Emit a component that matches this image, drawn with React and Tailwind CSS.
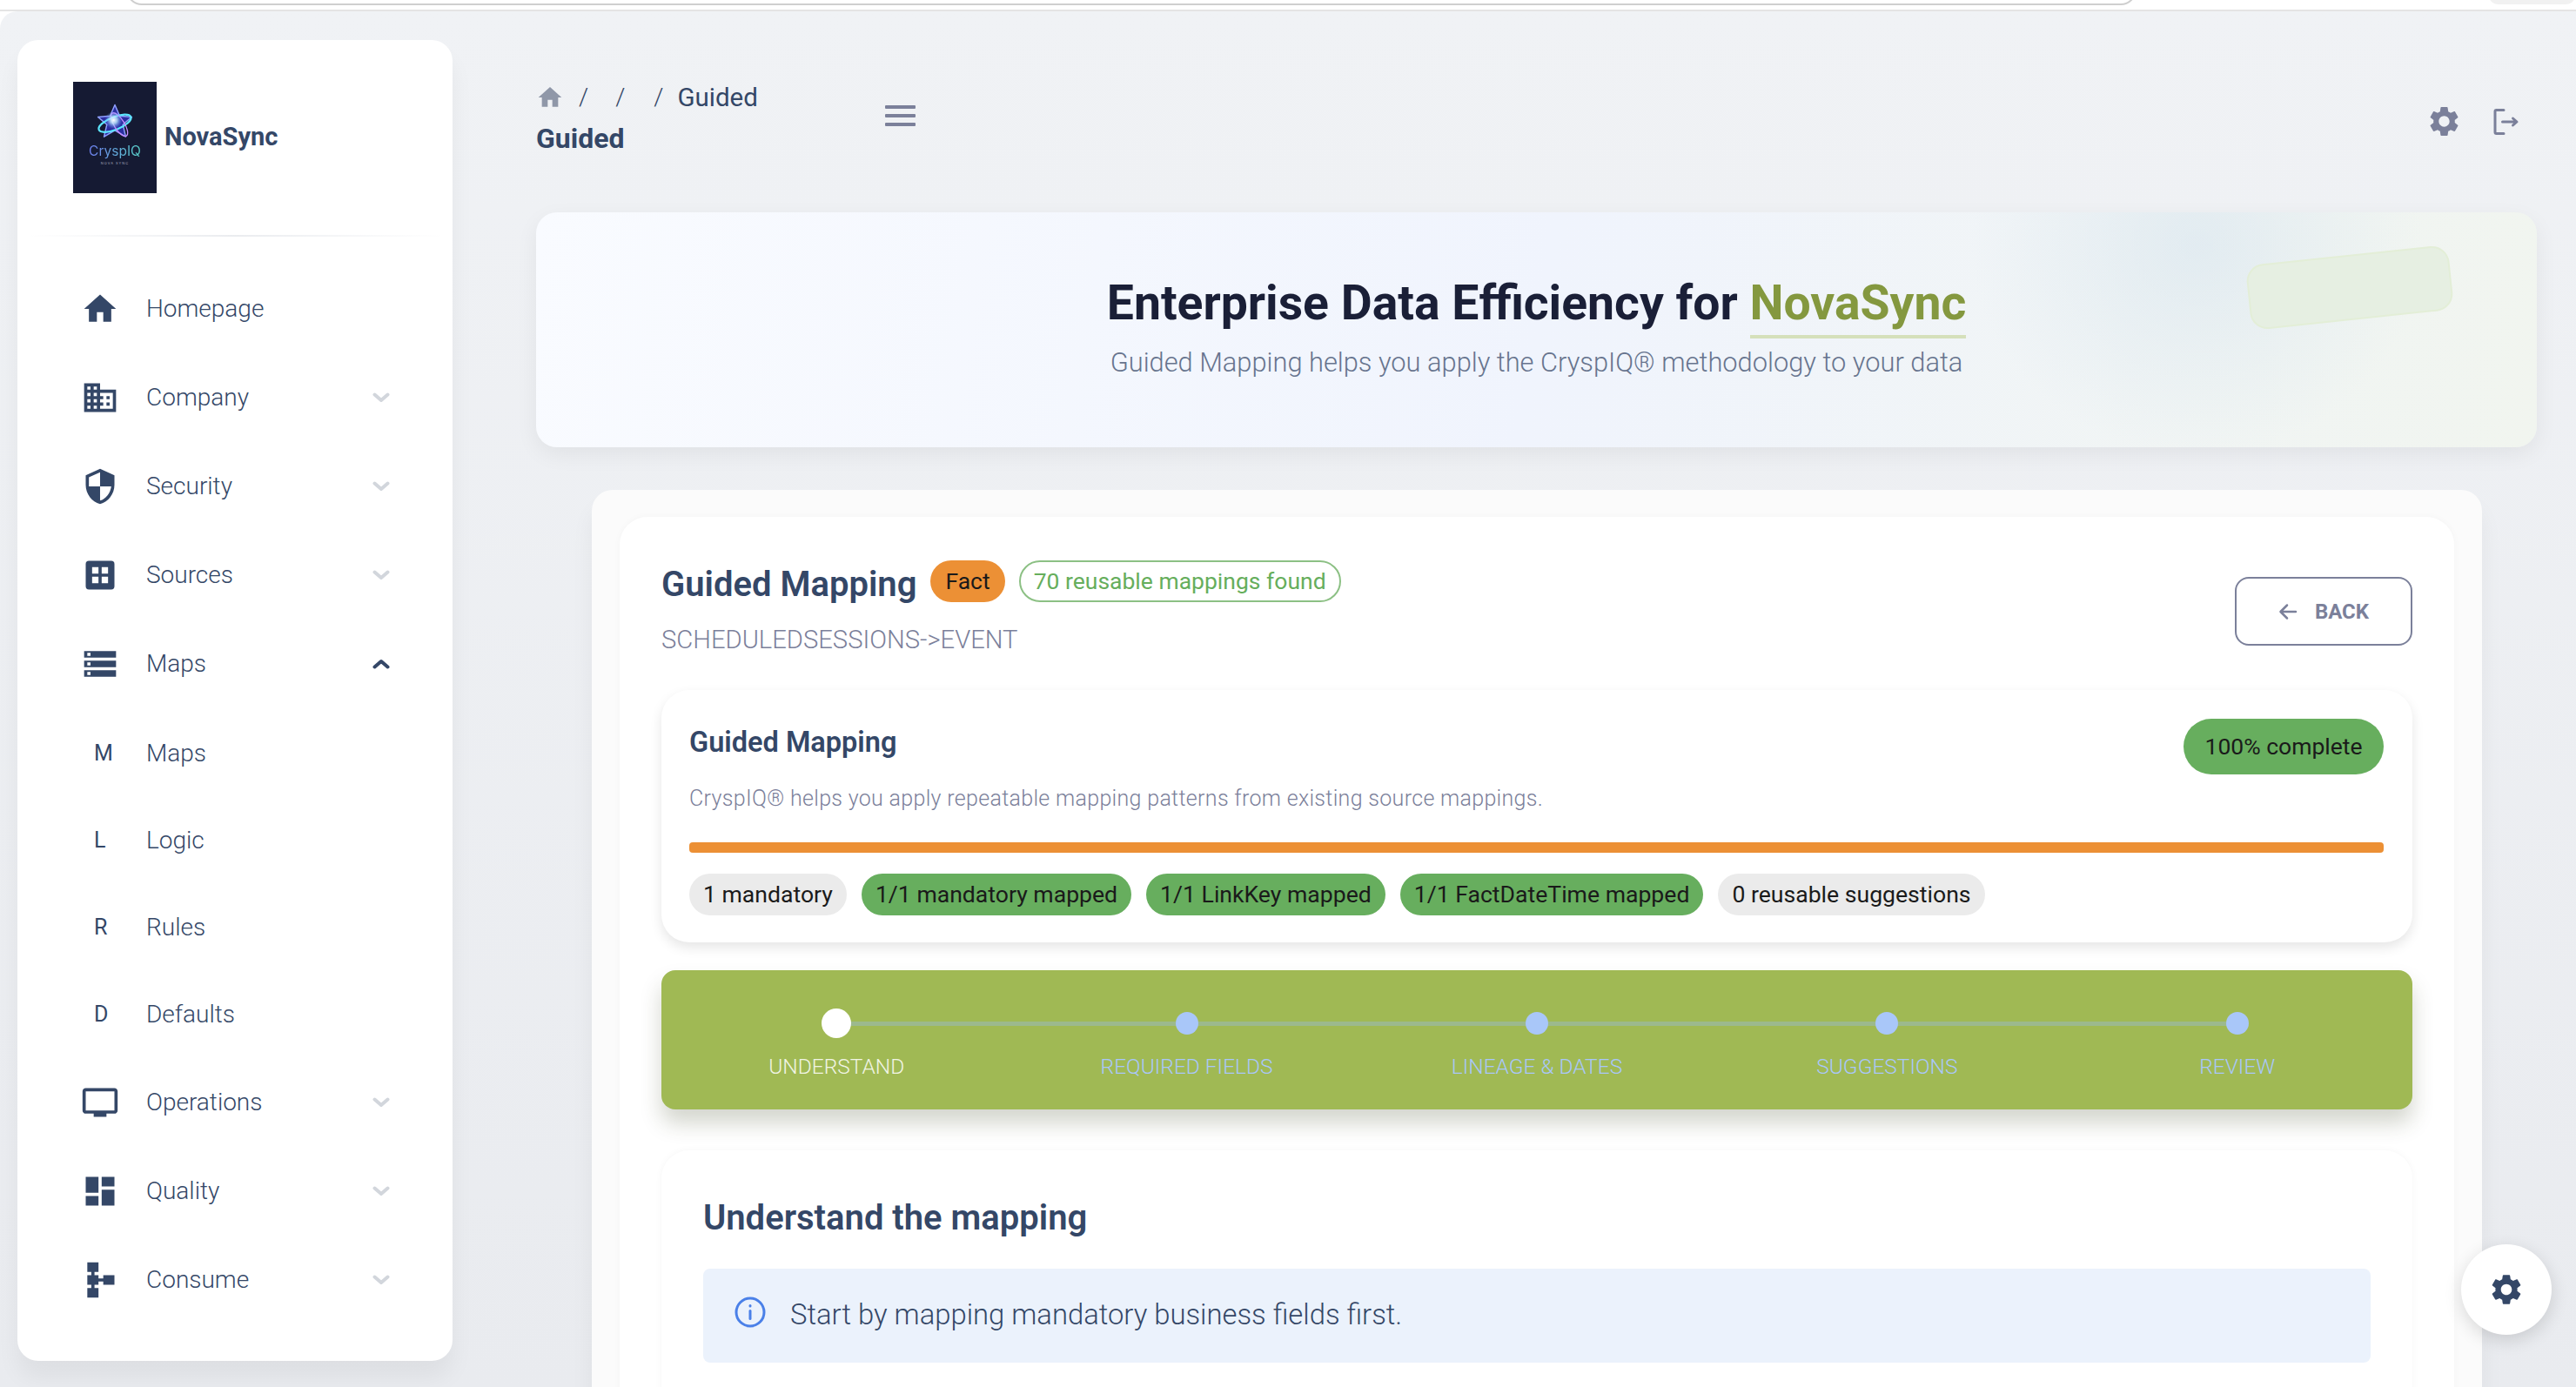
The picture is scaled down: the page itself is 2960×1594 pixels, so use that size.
import React from 'react';

const gearPath = "M19.14 12.94c.04-.3.06-.61.06-.94 0-.32-.02-.64-.07-.94l2.03-1.58c.18-.14.23-.41.12-.61l-1.92-3.32c-.12-.22-.37-.29-.59-.22l-2.39.96c-.5-.38-1.03-.7-1.62-.94l-.36-2.54c-.04-.24-.24-.41-.48-.41h-3.84c-.24 0-.43.17-.47.41l-.36 2.54c-.59.24-1.13.57-1.62.94l-2.39-.96c-.22-.08-.47 0-.59.22L2.74 8.87c-.12.21-.08.47.12.61l2.03 1.58c-.05.3-.09.63-.09.94s.02.64.07.94l-2.03 1.58c-.18.14-.23.41-.12.61l1.92 3.32c.12.22.37.29.59.22l2.39-.96c.5.38 1.03.7 1.62.94l.36 2.54c.05.24.24.41.48.41h3.84c.24 0 .44-.17.47-.41l.36-2.54c.59-.24 1.13-.56 1.62-.94l2.39.96c.22.08.47 0 .59-.22l1.92-3.32c.12-.22.07-.47-.12-.61l-2.01-1.58zM12 15.6c-1.98 0-3.6-1.62-3.6-3.6s1.62-3.6 3.6-3.6 3.6 1.62 3.6 3.6-1.62 3.6-3.6 3.6z";
const homePath = "M10 20v-6h4v6h5v-8h3L12 3 2 12h3v8z";

const Mi = ({ d, className }) => (
    <svg viewBox="0 0 24 24" fill="currentColor" fillRule="evenodd" className={className}>
        <path d={d} />
    </svg>
);

const Chevron = ({ up }) => (
    <svg viewBox="0 0 20 12" fill="none" stroke="currentColor" strokeWidth="4" strokeLinecap="round" strokeLinejoin="round"
        className={`w-[20px] h-[12px] ${up ? 'text-[#344767]' : 'text-[#d2d6dc]'}`}>
        <path d={up ? "M2.500 9.500l7.500-6.500 7.500 6.500" : "M2.500 2.500l7.500 6.500 7.500-6.500"} />
    </svg>
);

const icons = {
    home: homePath,
    company: "M12 7V3H2v18h20V7H12zM6 19H4v-2h2v2zm0-4H4v-2h2v2zm0-4H4V9h2v2zm0-4H4V5h2v2zm4 12H8v-2h2v2zm0-4H8v-2h2v2zm0-4H8V9h2v2zm0-4H8V5h2v2zm10 12h-8v-2h2v-2h-2v-2h2v-2h-2V9h8v10zm-2-8h-2v2h2v-2zm0 4h-2v2h2v-2z",
    security: "M12 1L3 5v6c0 5.55 3.84 10.74 9 12 5.16-1.26 9-6.45 9-12V5l-9-4zm0 10.99h7c-.53 4.12-3.28 7.79-7 8.94V12H5V6.3l7-3.11v8.8z",
    sources: "M5 3h14a2 2 0 0 1 2 2v14a2 2 0 0 1-2 2H5a2 2 0 0 1-2-2V5a2 2 0 0 1 2-2zm2 4v4h4V7H7zm6 0v4h4V7h-4zm-6 6v4h4v-4H7zm6 0v4h4v-4h-4z",
    maps: "M2 20h20v-4H2v4zm2-3h2v2H4v-2zM2 4v4h20V4H2zm4 3H4V5h2v2zm-4 7h20v-4H2v4zm2-3h2v2H4v-2z",
    operations: "M21 3H3c-1.1 0-2 .9-2 2v12c0 1.1.9 2 2 2h5v2h8v-2h5c1.1 0 1.99-.9 1.99-2L23 5c0-1.1-.9-2-2-2zm0 14H3V5h18v12z",
    quality: "M3 13h8V3H3v10zm0 8h8v-6H3v6zm10 0h8V11h-8v10zm0-18v6h8V3h-8z",
    consume: "M14 9v2h-3V9H8.5V7H11V1H4v6h2.5v2H4v6h2.5v2H4v6h7v-6H8.5v-2H11v-2h3v2h7V9h-7z",
};

const menu = [
    { label: 'Homepage', icon: 'home' },
    { label: 'Company', icon: 'company', arrow: true },
    { label: 'Security', icon: 'security', arrow: true },
    { label: 'Sources', icon: 'sources', arrow: true },
    { label: 'Maps', icon: 'maps', arrow: true, open: true },
    { label: 'Maps', letter: 'M', sub: true, first: true },
    { label: 'Logic', letter: 'L', sub: true },
    { label: 'Rules', letter: 'R', sub: true },
    { label: 'Defaults', letter: 'D', sub: true },
    { label: 'Operations', icon: 'operations', arrow: true },
    { label: 'Quality', icon: 'quality', arrow: true },
    { label: 'Consume', icon: 'consume', arrow: true },
];

const Logo = () => (
    <div className="w-[96px] h-[128px] bg-[#151a33] flex flex-col items-center shrink-0">
        <svg viewBox="0 0 60 60" fill="none" className="w-[44px] h-[44px] mt-[25px]">
            <defs>
                <radialGradient id="glow">
                    <stop offset="0%" stopColor="#ffffff" />
                    <stop offset="40%" stopColor="#bfeaff" stopOpacity="0.8" />
                    <stop offset="100%" stopColor="#5b8cff" stopOpacity="0" />
                </radialGradient>
            </defs>
            <path d="M30 2l7.500 17.500 19 1.500-14 12 4.500 19L30 42l-17 10 4.500-19-14-12 19-1.500z" fill="#2b2ea0" stroke="#8fa0ff" strokeWidth="2" strokeLinejoin="round" />
            <ellipse cx="30" cy="31" rx="27" ry="10" transform="rotate(-22 30 31)" stroke="#5ce6ff" strokeWidth="3" />
            <ellipse cx="37" cy="33" rx="8" ry="21" transform="rotate(-32 37 33)" stroke="#c78cff" strokeWidth="1.800" />
            <circle cx="28" cy="26" r="14" fill="url(#glow)" />
        </svg>
        <div className="mt-[1px] text-[15.500px] leading-[20px] bg-[linear-gradient(90deg,#6f7ff0,#58d0c8)] bg-clip-text text-transparent font-['Inter',sans-serif]">CryspIQ</div>
        <div className="text-[4px] leading-[8px] tracking-[1px] text-[#a5a9bd] font-['Inter',sans-serif]">NOVA SYNC</div>
    </div>
);

const Sidebar = () => (
    <aside className="w-[500px] h-[1518px] ml-[20px] mt-[33px] shrink-0 rounded-[24px] bg-white shadow-[0_20px_27px_rgba(0,0,0,0.05)]">
        <div className="flex items-center gap-[9px] pl-[64px] pt-[48px]">
            <Logo />
            <span className="text-[29px] font-bold text-[#344767]">NovaSync</span>
        </div>
        <div className="h-[2px] mt-[48px] mx-[10px] bg-[linear-gradient(90deg,rgba(52,71,103,0),rgba(52,71,103,0.1),rgba(52,71,103,0))]" />
        <nav className="pt-[32px]">
            {menu.map((item, i) => (
                <div key={i} className={`flex items-center ${item.sub ? 'h-[100px]' : 'h-[102px]'} ${item.first ? 'mt-[2px]' : ''} pl-[73px] pr-[72px]`}>
                    <span className="w-[75px] shrink-0 text-[#344767]">
                        {item.letter
                            ? <span className="pl-[15px] text-[25px] font-normal">{item.letter}</span>
                            : <Mi d={icons[item.icon]} className="w-[44px] h-[44px]" />}
                    </span>
                    <span className="flex-1 text-[28px] font-light text-[#344767]">{item.label}</span>
                    {item.arrow && <Chevron up={item.open} />}
                </div>
            ))}
        </nav>
    </aside>
);

const Header = () => (
    <div className="h-[231px] flex items-start pt-[84px] pr-[65px]">
        <div className="w-[401px] shrink-0">
            <div className="flex items-center h-[30px] text-[#344767] text-[28px] font-light">
                <Mi d={homePath} className="w-[32px] h-[32px] text-[#8f97a8]" />
                <span className="ml-[17px]">/</span>
                <span className="ml-[31px]">/</span>
                <span className="ml-[33px]">/</span>
                <span className="ml-[16px] text-[29.500px] font-normal">Guided</span>
            </div>
            <div className="mt-[14px] text-[32px] leading-[36px] font-bold text-[#344767]">Guided</div>
        </div>
        <svg viewBox="0 0 35 24" fill="#7b809a" className="w-[35px] h-[24px] mt-[24px]">
            <rect width="35" height="4" rx="1" />
            <rect y="10" width="35" height="4" rx="1" />
            <rect y="20" width="35" height="4" rx="1" />
        </svg>
        <div className="ml-auto flex items-center gap-[36px] mt-[22px]">
            <Mi d={gearPath} className="w-[41px] h-[41px] text-[#7b809a]" />
            <svg viewBox="0 0 30 30" fill="none" stroke="#7b809a" strokeWidth="3" strokeLinecap="round" strokeLinejoin="round" className="w-[30px] h-[30px]">
                <path d="M12 1.500H3.500a1.500 1.500 0 0 0-1.500 1.500v24a1.500 1.500 0 0 0 1.500 1.500H12" />
                <path d="M10.500 15h16M22.500 11l4.500 4-4.500 4" />
            </svg>
        </div>
    </div>
);

const Banner = () => (
    <div className="relative h-[270px] mr-[45px] rounded-[24px] overflow-hidden shadow-[0_8px_26px_rgba(0,0,0,0.06)] bg-[radial-gradient(ellipse_260px_240px_at_83%_14%,rgba(214,228,238,0.55),rgba(214,228,238,0)),linear-gradient(100deg,#f9fbff_0%,#f0f4fd_50%,#f1f5ef_100%)] flex flex-col items-center pt-[72px]">
        <div className="absolute left-[1967px] top-[49px] w-[234px] h-[75px] -rotate-[6deg] rounded-[20px] bg-[#e6efe2] border-2 border-[#e3eed7]" />
        <h1 className="text-[55.300px] leading-[66px] font-bold text-[#1a1f37]">
            Enterprise Data Efficiency for <span className="text-[#84983f] border-b-4 border-[#d5e0bb] pb-[4px]">NovaSync</span>
        </h1>
        <p className="mt-[15px] text-[30.800px] leading-[40px] font-light text-[#67748e]">Guided Mapping helps you apply the CryspIQ® methodology to your data</p>
    </div>
);

const Chip = ({ green, children }) => (
    <span className={`h-[48px] px-[16px] rounded-full flex items-center text-[26.600px] text-[#1a1a1a] ${green ? 'bg-[#67ae5e]' : 'bg-[#ebebeb]'}`}>{children}</span>
);

const steps = ['UNDERSTAND', 'REQUIRED FIELDS', 'LINEAGE & DATES', 'SUGGESTIONS', 'REVIEW'];

const Stepper = () => (
    <div className="relative h-[160px] mt-[32px] rounded-[16px] bg-[#a0b954] shadow-[0_16px_24px_rgba(60,70,30,0.22)] grid grid-cols-5">
        <div className="absolute left-[201px] right-[201px] top-[59px] h-[5px] bg-[#9cb98d]" />
        {steps.map((label, i) => (
            <div key={label} className="relative flex flex-col items-center">
                <div className="h-[122px] w-full flex items-center justify-center">
                    <span className={`rounded-full ${i === 0 ? 'w-[34px] h-[34px] bg-white' : 'w-[26px] h-[26px] bg-[#a9c7f9]'}`} />
                </div>
                <span className={`-mt-[26px] text-[24.500px] leading-[30px] font-light ${i === 0 ? 'text-[#f0f4e4]' : 'text-[#a9c7f9]'}`}>{label}</span>
            </div>
        ))}
    </div>
);

const MainCard = () => (
    <div className="ml-[64px] mr-[108px] mt-[49px] rounded-t-[24px] bg-[#fbfbfb] px-[32px] pt-[31px] shadow-[0_20px_27px_rgba(0,0,0,0.05)]">
        <div className="rounded-t-[32px] bg-white px-[48px] pt-[46px] h-[1200px] shadow-[0_0_8px_rgba(0,0,0,0.03)]">
            <div className="flex items-start justify-between">
                <div>
                    <div className="flex items-center gap-[16px]">
                        <span className="text-[40px] leading-[48px] font-semibold text-[#344767] mt-[8px]">Guided Mapping</span>
                        <span className="h-[48px] px-[17px] rounded-full bg-[#ec9035] text-[#1a1a1a] text-[26.500px] flex items-center">Fact</span>
                        <span className="h-[48px] px-[15px] rounded-full border-2 border-[#8cc084] text-[#66ae5c] text-[26.500px] flex items-center">70 reusable mappings found</span>
                    </div>
                    <div className="mt-[22px] text-[29.200px] leading-[34px] font-light text-[#7b809a]">SCHEDULEDSESSIONS-&gt;EVENT</div>
                </div>
                <button className="w-[204px] h-[79px] mt-[23px] rounded-[16px] border-2 border-[#7b809a] flex items-center justify-center gap-[20px] text-[#7b809a] text-[24px] font-bold">
                    <svg viewBox="0 0 22 22" fill="none" stroke="currentColor" strokeWidth="2.500" strokeLinecap="round" strokeLinejoin="round" className="w-[22px] h-[22px]">
                        <path d="M20 11H3M10 3.500L2.500 11l7.500 7.500" />
                    </svg>
                    BACK
                </button>
            </div>
            <div className="mt-[41px] h-[290px] rounded-[32px] bg-white pl-[32px] pr-[33px] pt-[33px] shadow-[0_6px_14px_rgba(0,0,0,0.1)]">
                <div className="flex items-start justify-between">
                    <span className="mt-[8px] text-[32.500px] leading-[38px] font-semibold text-[#344767]">Guided Mapping</span>
                    <span className="w-[230px] h-[64px] rounded-full bg-[#67ae5e] text-[#1a1a1a] text-[26.500px] flex items-center justify-center">100% complete</span>
                </div>
                <p className="mt-[13px] text-[25px] leading-[30px] font-light tracking-[0.32px] text-[#7b809a]">CryspIQ® helps you apply repeatable mapping patterns from existing source mappings.</p>
                <div className="h-[12px] mt-[35px] rounded-[4px] bg-[#ec9035]" />
                <div className="flex gap-[17px] mt-[24px]">
                    <Chip>1 mandatory</Chip>
                    <Chip green>1/1 mandatory mapped</Chip>
                    <Chip green>1/1 LinkKey mapped</Chip>
                    <Chip green>1/1 FactDateTime mapped</Chip>
                    <Chip>0 reusable suggestions</Chip>
                </div>
            </div>
            <Stepper />
            <div className="mt-[47px] h-[400px] rounded-t-[32px] bg-white px-[48px] pt-[54px] shadow-[0_0_8px_rgba(0,0,0,0.04)]">
                <h2 className="text-[40px] leading-[48px] font-semibold text-[#344767]">Understand the mapping</h2>
                <div className="mt-[34px] h-[108px] rounded-[8px] bg-[#ebf2fc] flex items-center pl-[36px]">
                    <svg viewBox="0 0 36 36" fill="none" stroke="#4a80e8" strokeWidth="3" strokeLinecap="round" className="w-[36px] h-[36px] -mt-[8px]">
                        <circle cx="18" cy="18" r="16" />
                        <path d="M18 16.500v9" />
                        <path d="M18 10.500v.5" />
                    </svg>
                    <span className="ml-[28px] text-[32.800px] font-light text-[#344767]">Start by mapping mandatory business fields first.</span>
                </div>
            </div>
        </div>
    </div>
);

const App = () => {
    return (
        <div className="relative w-[2960px] h-[1594px] overflow-hidden bg-white font-['Roboto',sans-serif]">
            {/* browser chrome left over at the top of the capture */}
            <div className="h-[13px] relative overflow-hidden border-b-2 border-[#e4e4e4]">
                <div className="absolute left-[145px] right-[505px] -top-[30px] h-[36px] rounded-[24px] border-2 border-[#cfcfcf]" />
                <div className="absolute left-[2859px] right-0 -top-[20px] h-[25px] rounded-[12px] bg-[#f1f1f1]" />
            </div>
            <div className="flex h-[1581px] rounded-tl-[20px] bg-[linear-gradient(180deg,#f0f2f5_0%,#e9ebef_100%)] overflow-hidden">
                <Sidebar />
                <main className="flex-1 pl-[96px] min-w-0">
                    <Header />
                    <Banner />
                    <MainCard />
                </main>
            </div>
            <div className="absolute left-[2828px] top-[1430px] w-[104px] h-[104px] rounded-full bg-white shadow-[0_6px_20px_rgba(0,0,0,0.14)] flex items-center justify-center">
                <Mi d={gearPath} className="w-[42px] h-[42px] text-[#344767]" />
            </div>
        </div>
    );
};

export default App;
